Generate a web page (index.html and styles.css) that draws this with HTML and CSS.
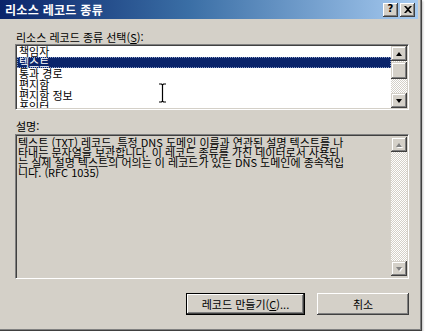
FILE: index.html
```html
<!DOCTYPE html>
<html lang="ko">
<head>
<meta charset="utf-8">
<title>리소스 레코드 종류</title>
<link rel="stylesheet" href="styles.css">
</head>
<body>
<div class="win">
  <div class="titlebar">
    <span class="title">리소스 레코드 종류</span>
    <div class="tbtns">
      <span class="tb help">?</span>
      <span class="tb close"><svg width="8" height="7" viewBox="0 0 8 7"><path d="M0 0h2l2 2 2-2h2L5 3.5 8 7H6L4 5 2 7H0l3-3.5z" fill="#000"/></svg></span>
    </div>
  </div>
  <div class="body">
    <div class="lbl">리소스 레코드 종류 선택(<u>S</u>):</div>
    <div class="listbox">
      <ul class="items">
        <li class="item">책임자</li>
        <li class="item sel">텍스트</li>
        <li class="item">통과 경로</li>
        <li class="item">편지함</li>
        <li class="item">편지함 정보</li>
        <li class="item">포인터</li>
      </ul>
      <div class="vscroll">
        <div class="sbtn"><span class="arr up"></span></div>
        <div class="track small"></div>
        <div class="thumb"></div>
        <div class="track"></div>
        <div class="sbtn"><span class="arr down"></span></div>
      </div>
    </div>
    <div class="lbl lbl2">설명:</div>
    <div class="desc">
      <div class="desctext">텍스트 (TXT) 레코드, 특정 DNS 도메인 이름과 연관된 설명 텍스트를 나<br>타내는 문자열을 보관합니다. 이 레코드 종류를 가진 데이터로서 사용되<br>는 실제 설명 텍스트의 어의는 이 레코드가 있는 DNS 도메인에 종속적입<br>니다. (RFC 1035)</div>
      <div class="vscroll">
        <div class="sbtn"><span class="arr up dis"></span></div>
        <div class="track"></div>
        <div class="sbtn"><span class="arr down dis"></span></div>
      </div>
    </div>
    <div class="btnrow">
      <button class="btn default">레코드 만들기(<u>C</u>)...</button>
      <button class="btn cancel">취소</button>
    </div>
  </div>
  <svg class="ibeam" width="9" height="20" viewBox="0 0 9 20">
    <path d="M1 1h2.5l1 1 1-1H8M4.5 2v16M1 19h2.5l1-1 1 1H8" stroke="#fff" stroke-width="3" fill="none"/>
    <path d="M1 1h2.5l1 1 1-1H8M4.5 2v16M1 19h2.5l1-1 1 1H8" stroke="#000" stroke-width="1.2" fill="none"/>
  </svg>
</div>
</body>
</html>
```

FILE: styles.css
```css
* { box-sizing: border-box; }
html, body { margin: 0; padding: 0; background: #fff; }
body {
  font-family: "Noto Sans CJK KR", "Noto Sans", sans-serif;
  font-size: 11px;
  color: #000;
}
.win {
  position: relative;
  width: 422px;
  height: 331px;
  background: #d4d0c8;
  box-shadow: inset -1px -1px #404040, inset -2px -2px #808080, 1px 1px 2px rgba(0,0,0,0.25);
  display: flex;
  flex-direction: column;
}
.titlebar {
  height: 19px;
  margin-right: 4px;
  background: linear-gradient(to right, #0a246a 0%, #3a6ea5 45%, #a6caf0 100%);
  display: flex;
  align-items: center;
  justify-content: space-between;
  padding: 0 3px 0 5px;
}
.title {
  color: #fff;
  font-weight: bold;
  font-size: 12px;
  line-height: 14px;
  letter-spacing: 0.3px;
}
.tbtns { display: flex; gap: 1px; }
.tb {
  width: 15px;
  height: 14px;
  background: #d4d0c8;
  box-shadow: inset -1px -1px #404040, inset 1px 1px #fff, inset -2px -2px #808080;
  display: flex;
  align-items: center;
  justify-content: center;
  font-family: "DejaVu Sans", sans-serif;
  font-weight: bold;
  font-size: 10px;
  line-height: 10px;
  padding-bottom: 1px;
}
.tb.close { margin-left: 1px; }
.body {
  flex: 1;
  display: flex;
  flex-direction: column;
  padding: 13px 13px 0 15px;
}
.lbl {
  height: 11px;
  line-height: 11px;
  padding-left: 1px;
  margin-bottom: 1px;
}
.lbl2 { margin-top: 11px; margin-bottom: 2px; }
.listbox, .desc {
  border: 1px solid;
  border-color: #808080 #fff #fff #808080;
  box-shadow: inset 1px 1px #404040, inset -1px -1px #d4d0c8;
  display: flex;
  padding: 1px;
}
.listbox {
  height: 66px;
  background: #fff;
}
.items {
  list-style: none;
  margin: 0;
  padding: 0;
  flex: 1;
  overflow: hidden;
}
.item {
  height: 11px;
  line-height: 11px;
  padding-left: 2px;
  white-space: nowrap;
}
.item.sel {
  background: #0a246a;
  color: #fff;
  outline: 1px dotted #8a9cc4;
  outline-offset: -1px;
}
.vscroll {
  width: 16px;
  display: flex;
  flex-direction: column;
}
.sbtn {
  height: 15px;
  background: #d4d0c8;
  box-shadow: inset -1px -1px #404040, inset 1px 1px #d4d0c8, inset -2px -2px #808080, inset 2px 2px #fff;
  display: flex;
  align-items: center;
  justify-content: center;
  flex: none;
}
.arr {
  width: 0;
  height: 0;
  border-left: 3.5px solid transparent;
  border-right: 3.5px solid transparent;
}
.arr.up { border-bottom: 4px solid #000; }
.arr.down { border-top: 4px solid #000; }
.arr.up.dis { border-bottom-color: #808080; filter: drop-shadow(1px 1px 0 #fff); }
.arr.down.dis { border-top-color: #808080; filter: drop-shadow(1px 1px 0 #fff); }
.track {
  flex: 1;
  background: repeating-conic-gradient(#fff 0 25%, #d4d0c8 0 50%) 0 0 / 2px 2px;
}
.track.small { flex: none; height: 1px; }
.thumb {
  height: 17px;
  flex: none;
  background: #d4d0c8;
  box-shadow: inset -1px -1px #404040, inset 1px 1px #d4d0c8, inset -2px -2px #808080, inset 2px 2px #fff;
}
.desc {
  height: 145px;
  background: #d4d0c8;
}
.desctext {
  flex: 1;
  line-height: 10px;
  padding: 1px 0 0 1px;
  white-space: nowrap;
}
.desc .vscroll { padding: 1px 0 1px 0; }
.btnrow {
  display: flex;
  justify-content: flex-end;
  gap: 12px;
  margin-top: 14px;
}
.btn {
  height: 22px;
  font: inherit;
  font-size: 11px;
  color: #000;
  background: #d4d0c8;
  padding: 0;
  margin: 0;
  border: none;
}
.btn.default {
  width: 119px;
  border: 1px solid #000;
  box-shadow: inset -1px -1px #404040, inset 1px 1px #fff, inset -2px -2px #808080;
}
.btn.cancel {
  width: 92px;
  box-shadow: inset -1px -1px #404040, inset 1px 1px #fff, inset -2px -2px #808080, inset 2px 2px #d4d0c8;
}
.ibeam {
  position: absolute;
  left: 158px;
  top: 83px;
}
```
